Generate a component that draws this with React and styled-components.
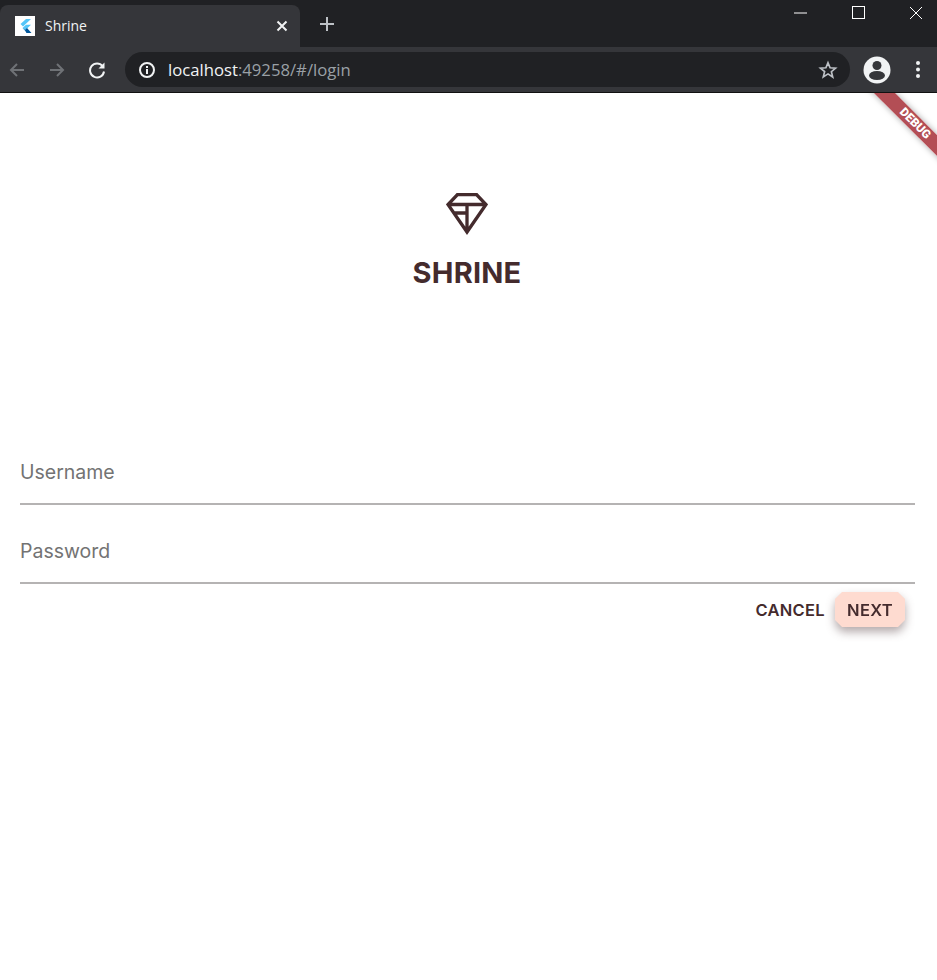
import React from 'react';
import styled, { createGlobalStyle } from 'styled-components';

const GlobalStyle = createGlobalStyle`
  html, body {
    margin: 0;
    padding: 0;
    background: #ffffff;
  }
  body {
    font-family: Inter, "Liberation Sans", sans-serif;
  }
`;

const Page = styled.div`
  width: 937px;
  height: 980px;
  display: flex;
  flex-direction: column;
  overflow: hidden;
`;

const TabStrip = styled.div`
  height: 47px;
  background: #202124;
  display: flex;
  align-items: flex-end;
  position: relative;
  flex-shrink: 0;
`;
const Tab = styled.div`
  width: 300px;
  height: 42px;
  background: #35363a;
  border-radius: 8px 8px 0 0;
  display: flex;
  align-items: center;
  padding: 0 12px 0 15px;
  box-sizing: border-box;
  color: #f1f3f4;
`;
const Favicon = styled.div`
  width: 20px;
  height: 20px;
  background: #ffffff;
  flex-shrink: 0;
  display: flex;
`;
const TabTitle = styled.span`
  font-family: "Open Sans", "Liberation Sans", sans-serif;
  font-size: 14px;
  margin: 0 0 2px 10px;
  flex: 1;
`;
const NewTab = styled.div`
  margin: 0 0 5px 19px;
  height: 37px;
  display: flex;
  align-items: center;
`;
const WindowControls = styled.div`
  position: absolute;
  top: 0;
  right: -8px;
  display: flex;
`;
const WindowButton = styled.div`
  width: 58px;
  height: 25px;
  display: flex;
  align-items: center;
  justify-content: center;
`;

const Toolbar = styled.div`
  height: 45px;
  background: #35363a;
  border-bottom: 1px solid #111;
  display: flex;
  align-items: center;
  flex-shrink: 0;
`;
const NavIcon = styled.div`
  width: 40px;
  height: 40px;
  display: flex;
  align-items: center;
  justify-content: center;
  flex-shrink: 0;
`;
const NavGroup = styled.div`
  display: flex;
  margin-left: -3px;
`;
const UrlBar = styled.div`
  width: 725px;
  height: 35px;
  margin-left: 8px;
  background: #202124;
  border-radius: 18px;
  display: flex;
  align-items: center;
  padding: 0 12px 0 13px;
  box-sizing: border-box;
`;
const UrlText = styled.div`
  font-family: "Open Sans", "Liberation Sans", sans-serif;
  font-size: 16.7px;
  margin-left: 12px;
  flex: 1;
  color: #9aa0a6;
  white-space: nowrap;
`;
const Host = styled.span`
  color: #f1f3f4;
`;
const ToolbarEnd = styled.div`
  display: flex;
  align-items: center;
  margin-left: 7px;
`;
const MenuDots = styled.div`
  margin-left: 19px;
  display: flex;
`;

const Content = styled.main`
  flex: 1;
  display: flex;
  flex-direction: column;
  padding: 0 22px 0 20px;
  position: relative;
  overflow: hidden;
`;
const Brand = styled.div`
  display: flex;
  flex-direction: column;
  align-items: center;
  padding: 100px 1px 0 0;
  color: #442b2d;
`;
const BrandName = styled.h1`
  margin: 21px 0 0;
  font-size: 29px;
  line-height: 34px;
  font-weight: 700;
  letter-spacing: 0.2px;
  color: #442b2d;
`;
const Field = styled.div`
  height: 79px;
  box-sizing: border-box;
  border-bottom: 2px solid #b5b3b3;
  display: flex;
  align-items: flex-end;
  padding-bottom: 19px;
  font-size: 19.5px;
  line-height: 24px;
  color: #737373;
`;
const FirstField = styled(Field)`
  margin-top: 136px;
`;
const Actions = styled.div`
  display: flex;
  justify-content: flex-end;
  align-items: center;
  gap: 10px;
  padding: 8px 10px 0 0;
`;
const TextButton = styled.button`
  border: none;
  background: ${(p) => (p.$raised ? '#fedbd0' : 'transparent')};
  color: #442b2d;
  font-family: inherit;
  font-size: 16.5px;
  font-weight: 600;
  letter-spacing: 0.3px;
  height: 35px;
  width: ${(p) => (p.$raised ? '70px' : 'auto')};
  padding: 0;
  clip-path: ${(p) =>
    p.$raised
      ? 'polygon(7px 0, 63px 0, 70px 7px, 70px 28px, 63px 35px, 7px 35px, 0 28px, 0 7px)'
      : 'none'};
`;
const ButtonShadow = styled.div`
  display: flex;
  filter: drop-shadow(0 5px 5px rgba(68, 43, 45, 0.4));
`;

const Ribbon = styled.div`
  position: absolute;
  top: 22.5px;
  right: -37.5px;
  width: 120px;
  height: 15px;
  background: rgba(150, 10, 20, 0.72);
  transform: rotate(45deg);
  box-shadow: 0 0 6px rgba(0, 0, 0, 0.35);
  color: #fff;
  font-family: Roboto, "Liberation Sans", sans-serif;
  font-size: 12px;
  font-weight: 900;
  line-height: 15px;
  text-align: center;
`;

const App = () => {
  return (
    <Page>
      <GlobalStyle />
      <TabStrip>
        <Tab>
          <Favicon>
            <svg width="20" height="20" viewBox="0 0 20 20">
              <path d="M11 3h5l-8 7.500-2.500-2.500z" fill="#54c5f8" />
              <path d="M7.500 12l3.500-3.200h5l-6 5.700z" fill="#54c5f8" />
              <path d="M7.500 12l2.500 2.500 1.500 2.500h5l-4.500-5-2 2z" fill="#01579b" />
            </svg>
          </Favicon>
          <TabTitle>Shrine</TabTitle>
          <svg width="12" height="12" viewBox="0 0 12 12">
            <path d="M1.500 1.500l9 9M10.500 1.500l-9 9" stroke="#f1f3f4" strokeWidth="2" />
          </svg>
        </Tab>
        <NewTab>
          <svg width="16" height="16" viewBox="0 0 16 16">
            <path d="M8 1v14M1 8h14" stroke="#bdc1c6" strokeWidth="2" />
          </svg>
        </NewTab>
        <WindowControls>
          <WindowButton>
            <svg width="13" height="2" viewBox="0 0 13 2">
              <path d="M0 1h13" stroke="#fff" strokeWidth="1" />
            </svg>
          </WindowButton>
          <WindowButton>
            <svg width="13" height="13" viewBox="0 0 13 13">
              <rect x="0.5" y="0.5" width="12" height="12" fill="none" stroke="#fff" />
            </svg>
          </WindowButton>
          <WindowButton>
            <svg width="14" height="14" viewBox="0 0 14 14">
              <path d="M1 1l12 12M13 1L1 13" stroke="#fff" strokeWidth="1" />
            </svg>
          </WindowButton>
        </WindowControls>
      </TabStrip>
      <Toolbar>
        <NavGroup>
          <NavIcon>
            <svg width="18" height="18" viewBox="0 0 18 18">
              <path d="M16 9H3M9 3L3 9l6 6" fill="none" stroke="#6f7276" strokeWidth="2" />
            </svg>
          </NavIcon>
          <NavIcon>
            <svg width="18" height="18" viewBox="0 0 18 18">
              <path d="M2 9h13M9 3l6 6-6 6" fill="none" stroke="#6f7276" strokeWidth="2" />
            </svg>
          </NavIcon>
          <NavIcon>
            <svg width="18" height="18" viewBox="0 0 18 18">
              <path d="M14.600 5.200A7 7 0 1 0 16 10.500" fill="none" stroke="#f1f3f4" strokeWidth="2" />
              <path d="M16.500 1.500v6h-6z" fill="#f1f3f4" />
            </svg>
          </NavIcon>
        </NavGroup>
        <UrlBar>
          <svg width="18" height="18" viewBox="0 0 18 18">
            <circle cx="9" cy="9" r="7" fill="none" stroke="#f1f3f4" strokeWidth="2" />
            <path d="M9 8v5" stroke="#f1f3f4" strokeWidth="2" />
            <path d="M9 5v2" stroke="#f1f3f4" strokeWidth="2" />
          </svg>
          <UrlText>
            <Host>localhost</Host>:49258/#/login
          </UrlText>
          <svg width="20" height="20" viewBox="0 0 20 20">
            <path
              d="M10 2.800l2.100 5 5.400.4-4.100 3.500 1.300 5.300L10 13.900 5.300 16.900l1.300-5.300L2.500 8.200l5.400-.4z"
              fill="none"
              stroke="#bdc1c6"
              strokeWidth="1.700"
            />
          </svg>
        </UrlBar>
        <ToolbarEnd>
          <NavIcon>
            <svg width="28" height="28" viewBox="0 0 28 28">
              <circle cx="14" cy="14" r="13.500" fill="#f1f3f4" />
              <circle cx="14" cy="9.500" r="4.500" fill="#35363a" />
              <ellipse cx="14" cy="19.500" rx="8" ry="4.500" fill="#35363a" />
            </svg>
          </NavIcon>
          <MenuDots>
            <svg width="4" height="17" viewBox="0 0 4 17">
              <circle cx="2" cy="2" r="2" fill="#f1f3f4" />
              <circle cx="2" cy="8.500" r="2" fill="#f1f3f4" />
              <circle cx="2" cy="15" r="2" fill="#f1f3f4" />
            </svg>
          </MenuDots>
        </ToolbarEnd>
      </Toolbar>
      <Content>
        <Ribbon>DEBUG</Ribbon>
        <Brand>
          <svg width="42" height="42" viewBox="0 0 42 42">
            <path
              d="M11.500 1.500h19L40 11.500 21 39 2 11.500z M2 11.500h38 M21 11.500V39 M8.500 20H21"
              fill="none"
              stroke="#442b2d"
              strokeWidth="3.300"
            />
          </svg>
          <BrandName>SHRINE</BrandName>
        </Brand>
        <FirstField>Username</FirstField>
        <Field>Password</Field>
        <Actions>
          <TextButton>CANCEL</TextButton>
          <ButtonShadow>
            <TextButton $raised>NEXT</TextButton>
          </ButtonShadow>
        </Actions>
      </Content>
    </Page>
  );
};

export default App;
